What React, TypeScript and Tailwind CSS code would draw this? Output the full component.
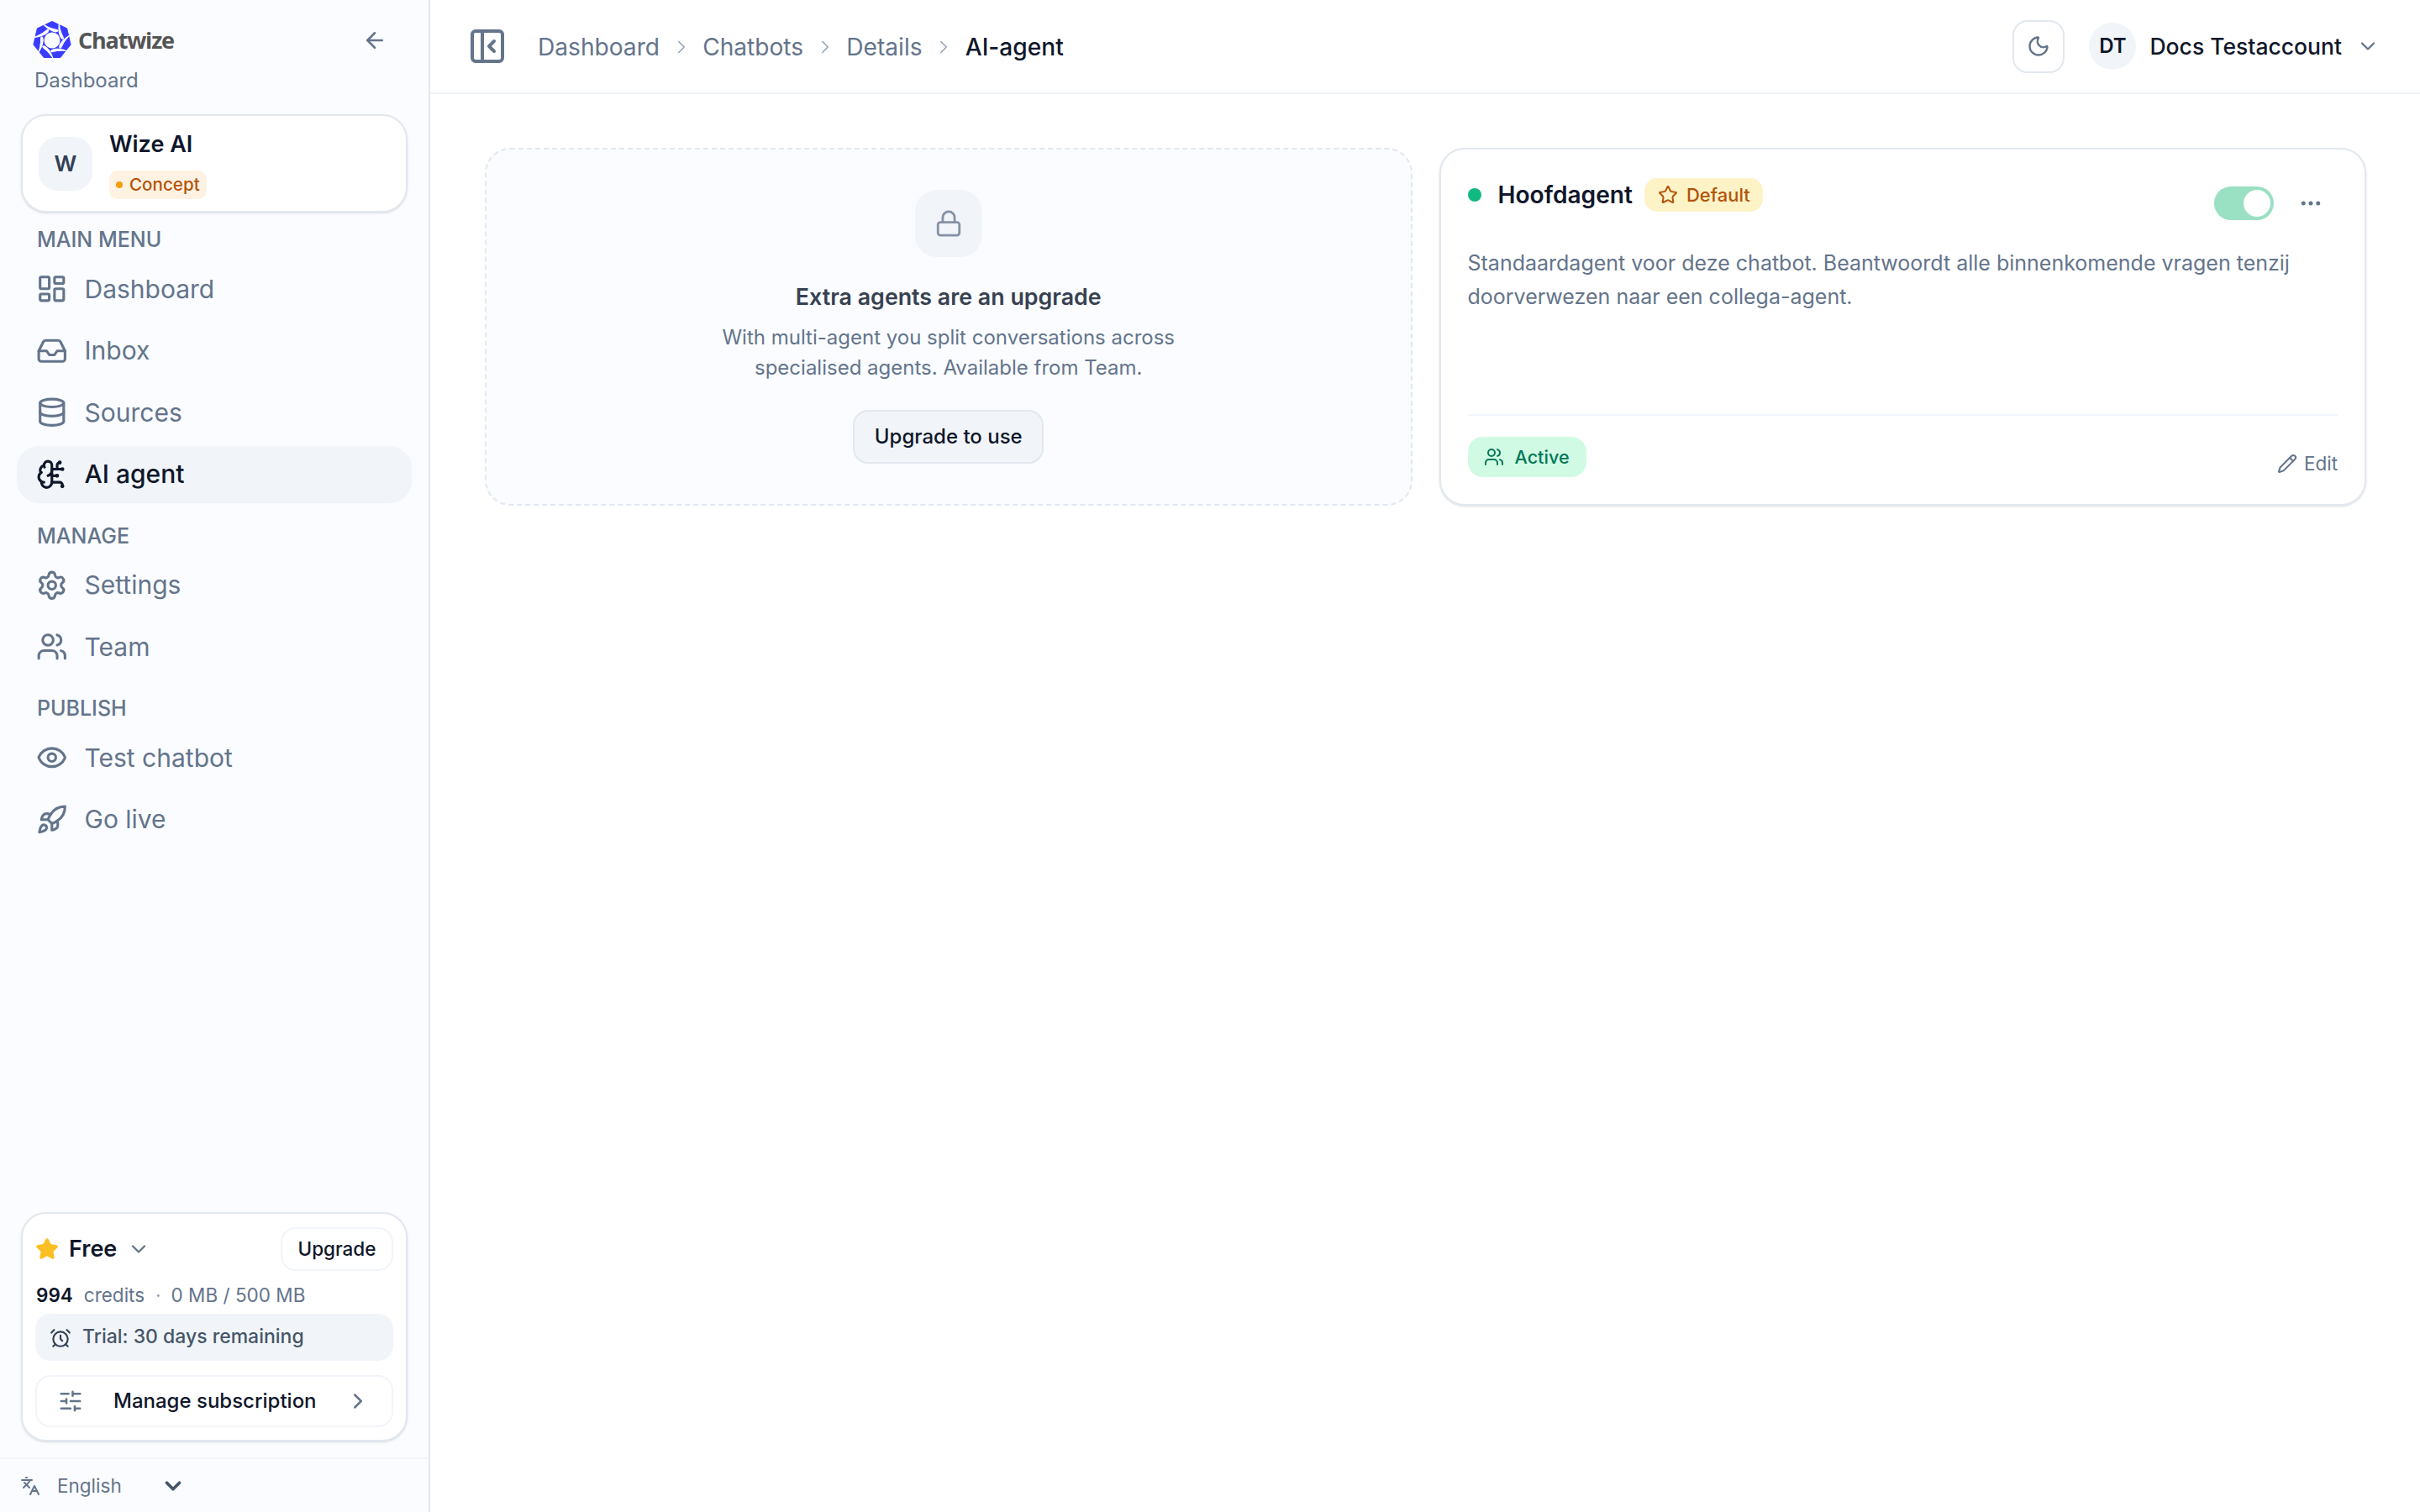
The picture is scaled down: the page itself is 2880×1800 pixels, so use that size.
import {
  AlarmClock,
  ArrowLeft,
  BrainCircuit,
  ChevronDown,
  ChevronRight,
  Database,
  Ellipsis,
  Eye,
  Inbox,
  Languages,
  LayoutDashboard,
  Lock,
  Moon,
  PanelLeftClose,
  Pencil,
  Rocket,
  Settings,
  SlidersHorizontal,
  Star,
  Users,
} from "lucide-react";
import type { LucideIcon } from "lucide-react";

const petals = [0, 1, 2, 3, 4, 5, 6];

function Logo() {
  return (
    <svg viewBox="0 0 48 48" className="h-[48px] w-[48px] shrink-0">
      <polygon
        points="24,2.5 40.8,10.6 45,28.8 33.3,43.4 14.7,43.4 3,28.8 7.2,10.6"
        fill="#3a3dff"
        stroke="#3a3dff"
        strokeWidth="3"
        strokeLinejoin="round"
      />
      <circle cx="24" cy="24" r="9.5" fill="#fafcff" />
      {petals.map((i) => (
        <path
          key={i}
          transform={`rotate(${(i * 360) / 7} 24 24)`}
          d="M10.5 2 Q19 9 29 10.8 Q32.5 11.6 31 13.6 Q29.5 15 26 14 Q17 11 10.5 2 Z"
          fill="#fafcff"
        />
      ))}
    </svg>
  );
}

type NavItemProps = { icon: LucideIcon; label: string; active?: boolean };

function NavItem({ icon: Icon, label, active }: NavItemProps) {
  return (
    <div
      className={`ml-[20px] flex h-[68px] w-[470px] items-center gap-[20px] rounded-[26px] pl-[23px] text-[30px] ${
        active ? "bg-[#f1f5f9] font-medium text-[#0f172a]" : "text-[#64748b]"
      }`}
    >
      <Icon size={37.5} className="shrink-0" />
      <span>{label}</span>
    </div>
  );
}

function NavLabel({ children, first }: { children: string; first?: boolean }) {
  return (
    <div
      className={`h-[36px] pl-[44px] text-[25px] leading-[36px] font-medium text-[#64748b] ${
        first ? "mt-[14px] mb-[7px]" : "mt-[21px] mb-[7px]"
      }`}
    >
      {children}
    </div>
  );
}

function Sidebar() {
  return (
    <aside className="flex h-full w-[512px] shrink-0 flex-col border-r-2 border-[#e2e8f0] bg-[#fafcff] pt-[24px]">
      <div className="flex h-[48px] items-center pr-[52px] pl-[38px]">
        <Logo />
        <span className="ml-[7px] font-['Open_Sans',sans-serif] text-[27px] font-bold tracking-[-1.2px] text-[#555555]">
          Chatwize
        </span>
        <ArrowLeft size={30} className="mr-[-3px] ml-auto text-[#64748b]" />
      </div>
      <div className="mt-[9px] pl-[41px] text-[24px] leading-[30px] text-[#64748b]">Dashboard</div>

      <div className="mx-[25px] mt-[25px] flex h-[117px] items-center gap-[20px] rounded-[30px] border-2 border-[#e2e8f0] bg-white pl-[19px] shadow-sm">
        <div className="flex h-[64px] w-[64px] items-center justify-center rounded-[22px] bg-[#f1f5f9] text-[26.25px] font-semibold text-[#334155]">
          W
        </div>
        <div className="flex flex-col items-start">
          <span className="text-[27px] leading-[40px] font-semibold text-[#0f172a]">Wize AI</span>
          <span className="mt-[11px] flex h-[34px] items-center gap-[8px] rounded-[10px] bg-[#fef3e2] px-[8px] text-[20.6px] font-medium text-[#b45309]">
            <span className="h-[8px] w-[8px] rounded-full bg-[#f59e0b]" />
            Concept
          </span>
        </div>
      </div>

      <NavLabel first>MAIN MENU</NavLabel>
      <div className="flex flex-col gap-[5.5px]">
        <NavItem icon={LayoutDashboard} label="Dashboard" />
        <NavItem icon={Inbox} label="Inbox" />
        <NavItem icon={Database} label="Sources" />
        <NavItem icon={BrainCircuit} label="AI agent" active />
      </div>

      <NavLabel>MANAGE</NavLabel>
      <div className="flex flex-col gap-[5.5px]">
        <NavItem icon={Settings} label="Settings" />
        <NavItem icon={Users} label="Team" />
      </div>

      <NavLabel>PUBLISH</NavLabel>
      <div className="flex flex-col gap-[5.5px]">
        <NavItem icon={Eye} label="Test chatbot" />
        <NavItem icon={Rocket} label="Go live" />
      </div>

      <div className="mx-[25px] mt-auto mb-[19px] rounded-[30px] border-2 border-[#e2e8f0] bg-white px-[15px] pt-[16px] pb-[15px] shadow-sm">
        <div className="flex h-[52px] items-center">
          <Star size={28} className="shrink-0 fill-[#fbbf24] text-[#fbbf24]" />
          <span className="ml-[12px] text-[27px] font-semibold text-[#0f172a]">Free</span>
          <ChevronDown size={28} className="ml-[12px] text-[#64748b]" />
          <button className="ml-auto h-[52px] w-[134px] rounded-[18px] border-2 border-[#f1f5f9] text-[22.5px] font-medium text-[#0f172a]">
            Upgrade
          </button>
        </div>
        <div className="mt-[14px] flex items-center pl-[1px] text-[22.5px] leading-[30px] text-[#64748b]">
          <span className="font-semibold text-[#0f172a]">994</span>
          <span className="ml-[13px]">credits</span>
          <span className="ml-[13px] text-[#94a3b8]">·</span>
          <span className="ml-[12px]">0 MB / 500 MB</span>
        </div>
        <div className="mt-[7px] flex h-[56px] items-center gap-[13px] rounded-[18px] bg-[#f1f5f9] pb-[2px] pl-[17px] text-[23px] font-medium text-[#475569]">
          <AlarmClock size={26} className="mt-[3px] shrink-0 text-[#334155]" />
          Trial: 30 days remaining
        </div>
        <div className="mt-[17px] flex h-[62px] items-center rounded-[18px] border-2 border-[#f1f5f9] pr-[25px] pl-[25px] text-[24px] font-medium text-[#0f172a]">
          <SlidersHorizontal size={30} className="shrink-0 text-[#64748b]" />
          <span className="ml-[36px]">Manage subscription</span>
          <ChevronRight size={30} className="ml-auto shrink-0 text-[#64748b]" />
        </div>
      </div>

      <div className="flex h-[65px] items-center border-t-2 border-[#f1f5f9] pl-[24px] text-[22.5px] text-[#64748b]">
        <Languages size={24} className="shrink-0" />
        <span className="ml-[20px]">English</span>
        <ChevronDown size={30} strokeWidth={3} className="ml-[46px] text-[#475569]" />
      </div>
    </aside>
  );
}

function Crumb({ label }: { label: string }) {
  return (
    <>
      <span className="text-[#64748b]">{label}</span>
      <ChevronRight size={26} strokeWidth={1.5} className="text-[#94a3b8]" />
    </>
  );
}

function TopBar() {
  return (
    <header className="flex h-[112px] shrink-0 items-center border-b-2 border-[#f1f5f9] pr-[48px] pl-[44px]">
      <PanelLeftClose size={48} className="text-[#64748b]" />
      <nav className="ml-[36px] flex items-center gap-[12.6px] pt-[2px] text-[28.125px]">
        <Crumb label="Dashboard" />
        <Crumb label="Chatbots" />
        <Crumb label="Details" />
        <span className="font-medium text-[#0f172a]">AI-agent</span>
      </nav>
      <div className="ml-auto flex items-center">
        <div className="flex h-[63px] w-[62px] items-center justify-center rounded-[18px] border-2 border-[#e2e8f0]">
          <Moon size={28} className="text-[#64748b]" />
        </div>
        <div className="ml-[29px] flex h-[56px] w-[56px] items-center justify-center rounded-full bg-[#f1f5f9] text-[24px] font-semibold text-[#0f172a]">
          DT
        </div>
        <span className="ml-[16px] pt-[2px] text-[26.5px] font-medium text-[#0f172a]">Docs Testaccount</span>
        <ChevronDown size={28} className="ml-[17px] text-[#64748b]" />
      </div>
    </header>
  );
}

function UpgradeCard() {
  return (
    <div className="flex h-[426px] flex-col items-center rounded-[30px] border-2 border-dashed border-[#e2e8f0] bg-[#fafcff] pt-[48px]">
      <div className="flex h-[80px] w-[80px] items-center justify-center rounded-[26px] bg-[#f1f5f9]">
        <Lock size={34} className="text-[#8691a4]" />
      </div>
      <h3 className="mt-[27px] text-[26.8px] leading-[40px] font-semibold text-[#374151]">
        Extra agents are an upgrade
      </h3>
      <p className="mt-[11px] text-center text-[24px] leading-[36px] text-[#64748b]">
        With multi-agent you split conversations across
        <br />
        specialised agents. Available from Team.
      </p>
      <button className="mt-[32px] h-[64px] w-[227px] rounded-[18px] border-2 border-[#e2e8f0] bg-[#f1f5f9] text-[24px] font-medium text-[#0f172a]">
        Upgrade to use
      </button>
    </div>
  );
}

function AgentCard() {
  return (
    <div className="flex h-[426px] flex-col rounded-[30px] border-2 border-[#e2e8f0] bg-white px-[32px] pt-[34px] pb-[32px] shadow-sm">
      <div className="flex items-start">
        <div className="flex h-[40px] items-center">
          <span className="h-[16px] w-[16px] rounded-full bg-[#10b981]" />
          <span className="ml-[20px] text-[28.125px] font-semibold text-[#0f172a]">Hoofdagent</span>
          <span className="ml-[14px] flex h-[40px] items-center gap-[10px] rounded-[15px] bg-[#fef3c7] pr-[15px] pl-[16px] text-[22px] font-medium text-[#b45309]">
            <Star size={24} />
            Default
          </span>
        </div>
        <div className="mt-[10px] ml-auto flex items-center">
          <div className="flex h-[40px] w-[71px] items-center justify-end rounded-full bg-[#9ae0c3] pr-[4px]">
            <span className="h-[32px] w-[32px] rounded-full bg-white" />
          </div>
          <Ellipsis size={30} className="mr-[17px] ml-[29px] text-[#64748b]" />
        </div>
      </div>
      <p className="mt-[31px] flex-1 text-[25px] leading-[40px] text-[#64748b]">
        Standaardagent voor deze chatbot. Beantwoordt alle binnenkomende vragen tenzij
        <br />
        doorverwezen naar een collega-agent.
      </p>
      <div className="flex items-end justify-between border-t-2 border-[#f1f5f9] pt-[25px]">
        <span className="flex h-[48px] items-center gap-[13px] rounded-[18px] bg-[#d1fae5] pr-[20px] pl-[19px] text-[21.6px] font-medium text-[#047857]">
          <Users size={24} />
          Active
        </span>
        <span className="flex h-[32px] items-center gap-[8px] text-[22.5px] text-[#64748b]">
          <Pencil size={24} />
          Edit
        </span>
      </div>
    </div>
  );
}

export default function App() {
  return (
    <div className="flex h-screen w-screen overflow-hidden bg-white font-['Inter',sans-serif]">
      <Sidebar />
      <main className="flex min-w-0 flex-1 flex-col">
        <TopBar />
        <div className="grid grid-cols-2 gap-[32px] pt-[64px] pr-[64px] pl-[65px]">
          <UpgradeCard />
          <AgentCard />
        </div>
      </main>
    </div>
  );
}
